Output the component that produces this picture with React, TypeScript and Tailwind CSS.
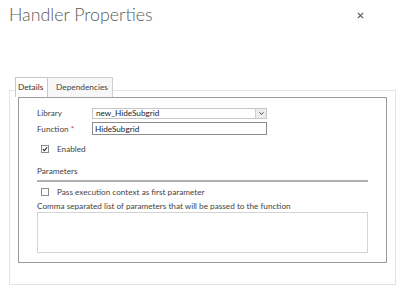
import { ChevronDown } from 'lucide-react';

const font = { fontFamily: 'Lato, "Open Sans", Arial, sans-serif' };

function Checkbox({ checked }: { checked?: boolean }) {
    return (
        <span className="flex h-[8px] w-[8px] items-center justify-center border border-[#8a8a8a] bg-white">
            {checked && (
                <svg viewBox="0 0 8 8" className="h-[8px] w-[8px]">
                    <path d="M1.2 4.2 L3.2 6.2 L6.8 1.6" fill="none" stroke="#222" strokeWidth="1.4" />
                </svg>
            )}
        </span>
    );
}

export default function App() {
    return (
        <div className="relative h-[290px] w-[400px] overflow-hidden bg-white text-[#444]" style={font}>
            {/* header */}
            <div className="flex items-start justify-between pl-[9px] pr-[36px] pt-[2px]">
                <h1 className="text-[17.8px] font-light leading-[24px] text-[#5a5a5a]">Handler Properties</h1>
                <svg viewBox="0 0 8 8" className="mt-[10px] h-[7px] w-[7px]">
                    <path d="M1 1 L7 7 M7 1 L1 7" stroke="#555" strokeWidth="1.3" />
                </svg>
            </div>

            {/* outer frame */}
            <div className="ml-[9px] mt-[64px] h-[195px] w-[387px] border border-[#e4e4e4] px-[8px]">
                <div className="relative -mt-[14px] ml-[-3px] flex h-[20px] items-stretch text-[8.3px]">
                    <div className="flex w-[33px] items-center border border-b-0 border-[#c8c8c8] bg-white pl-[2px] text-[#333]">Details</div>
                    <div className="flex w-[65px] items-center border border-b-0 border-l-0 border-[#d0d0d0] bg-[#f7f7f7] pl-[8px] text-[#444]">
                        Dependencies
                    </div>
                </div>

                {/* inner panel */}
                <div className="h-[166px] border border-[#9c9c9c] bg-white px-[18px] pt-[9px] text-[8.2px] leading-[12px]">
                    <div className="flex h-[12px] items-center">
                        <span className="w-[55px]">Library</span>
                        <div className="flex h-[11px] w-[175px] items-center justify-between border border-[#c6c6c6] pl-[3px] text-[#222]">
                            <span>new_HideSubgrid</span>
                            <span className="flex h-[9px] w-[11px] items-center justify-center border-l border-[#d0d0d0] bg-[#ececec]">
                                <ChevronDown size={7} strokeWidth={3} color="#333" />
                            </span>
                        </div>
                    </div>
                    <div className="mt-[3px] flex h-[13px] items-center">
                        <span className="w-[55px]">
                            Function <span className="text-[#e03030]">*</span>
                        </span>
                        <div className="flex h-[13px] w-[175px] items-center border border-[#8c8c8c] pl-[2px] text-[#222]">HideSubgrid</div>
                    </div>
                    <div className="mt-[8px] flex h-[12px] items-center gap-[8px] pl-[4px]">
                        <Checkbox checked />
                        <span>Enabled</span>
                    </div>

                    <div className="mt-[10px]">Parameters</div>
                    <div className="mt-[3px] h-[2px] bg-[#b0b0b0]" />
                    <div className="mt-[4px] flex h-[12px] items-center gap-[8px] pl-[4px]">
                        <Checkbox />
                        <span>Pass execution context as first parameter</span>
                    </div>
                    <div className="mt-[2px]">Comma separated list of parameters that will be passed to the function</div>
                    <div className="h-[41px] border border-[#d4d4d4]" />
                </div>
            </div>
        </div>
    );
}
